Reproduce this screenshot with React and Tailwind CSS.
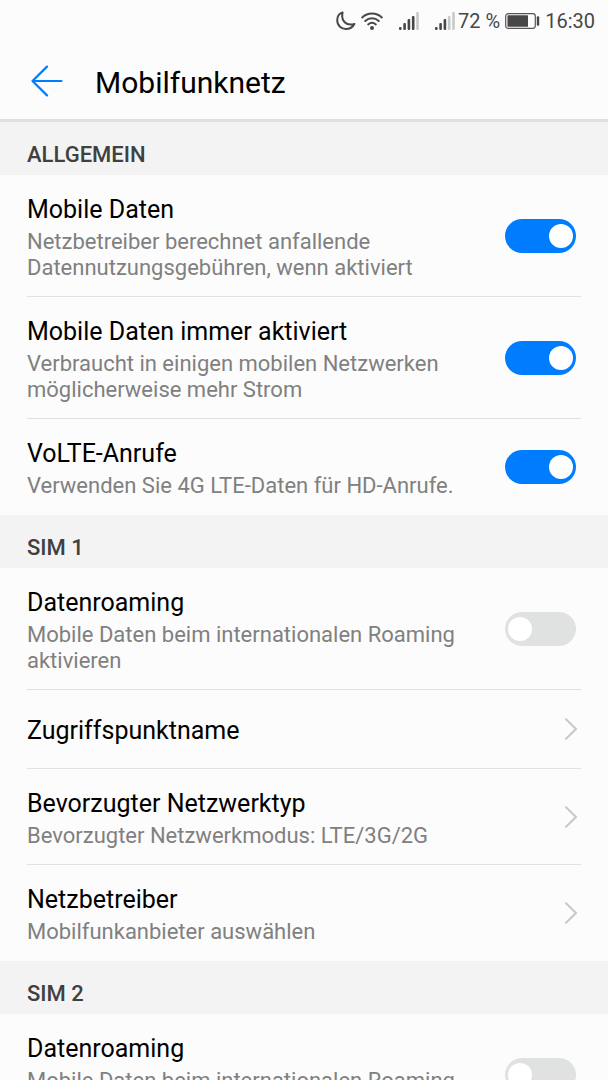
import React, { useState } from 'react';

const SECTIONS = [
  {
    title: 'ALLGEMEIN',
    items: [
      {
        id: 'mobile-data',
        type: 'switch',
        label: 'Mobile Daten',
        summary: 'Netzbetreiber berechnet anfallende Datennutzungsgebühren, wenn aktiviert',
        enabled: true
      },
      {
        id: 'always-on',
        type: 'switch',
        label: 'Mobile Daten immer aktiviert',
        summary: 'Verbraucht in einigen mobilen Netzwerken möglicherweise mehr Strom',
        enabled: true
      },
      {
        id: 'volte',
        type: 'switch',
        label: 'VoLTE-Anrufe',
        summary: 'Verwenden Sie 4G LTE-Daten für HD-Anrufe.',
        enabled: true
      }
    ]
  },
  {
    title: 'SIM 1',
    items: [
      {
        id: 'sim1-roaming',
        type: 'switch',
        label: 'Datenroaming',
        summary: 'Mobile Daten beim internationalen Roaming aktivieren',
        enabled: false
      },
      { id: 'sim1-apn', type: 'link', label: 'Zugriffspunktname' },
      {
        id: 'sim1-type',
        type: 'link',
        label: 'Bevorzugter Netzwerktyp',
        summary: 'Bevorzugter Netzwerkmodus: LTE/3G/2G'
      },
      {
        id: 'sim1-operator',
        type: 'link',
        label: 'Netzbetreiber',
        summary: 'Mobilfunkanbieter auswählen'
      }
    ]
  },
  {
    title: 'SIM 2',
    items: [
      {
        id: 'sim2-roaming',
        type: 'switch',
        label: 'Datenroaming',
        summary: 'Mobile Daten beim internationalen Roaming aktivieren',
        enabled: false
      }
    ]
  }
];

const MoonIcon = () => (
  <svg width="20" height="20" viewBox="0 0 20 20" fill="none" stroke="#474747" strokeWidth="2" strokeLinejoin="round">
    <path d="M6.6 1.4C3.2 2.6 1.2 5.6 1.2 9.4c0 4.9 3.8 8.6 8.6 8.6 3.9 0 7-2 8.6-5-1.4.5-2.4.6-3.8.6-4.9 0-8.2-3.5-8.4-7.8 0-1.6.1-2.8.4-4.4z" />
  </svg>
);

const WifiIcon = () => (
  <svg width="22" height="20" viewBox="0 0 22 20" fill="none" stroke="#474747" strokeWidth="2" strokeLinecap="round">
    <path d="M1.2 6.4c5.6-5.2 14-5.2 19.6 0" />
    <path d="M4.2 10c4-3.6 9.6-3.6 13.6 0" />
    <path d="M7.2 13.4c2.3-2 5.3-2 7.6 0" />
    <circle cx="11" cy="17" r="2" fill="#474747" stroke="none" />
  </svg>
);

const SignalIcon = ({ level }) => (
  <svg width="20" height="18" viewBox="0 0 20 18">
    {[3, 7, 11, 14, 18].map((height, i) => (
      <rect
        key={height}
        x={i * 4.3}
        y={18 - height}
        width="2.6"
        height={height}
        rx="1"
        fill={i < level ? '#474747' : '#c8c8c8'}
      />
    ))}
  </svg>
);

const BatteryIcon = () => (
  <svg width="35" height="16" viewBox="0 0 35 16">
    <rect x="0.7" y="0.7" width="29.6" height="14.6" rx="2.5" fill="none" stroke="#555" strokeWidth="1.2" />
    <rect x="2.5" y="2.3" width="20.5" height="11.4" rx="0.5" fill="#474747" />
    <rect x="31.8" y="3.2" width="2.4" height="9.6" rx="1" fill="#474747" />
  </svg>
);

const BackIcon = () => (
  <svg width="32" height="32" viewBox="0 0 32 32" fill="none" stroke="#007dff" strokeWidth="2.2" strokeLinecap="round" strokeLinejoin="round">
    <path d="M16 1.6 1.5 16 16 30.4M1.5 16h29" />
  </svg>
);

const ChevronIcon = () => (
  <svg width="14" height="22" viewBox="0 0 14 22" fill="none" stroke="#c9c9c9" strokeWidth="2.1" strokeLinecap="round" strokeLinejoin="round" className="shrink-0">
    <path d="M2 1.3 12 11 2 20.7" />
  </svg>
);

const ItemText = ({ label, summary }) => (
  <span className="block min-w-0 flex-1 pt-[19px] pb-[15px]">
    <span className="block text-[25px] leading-8 text-black">{label}</span>
    {summary && <span className="mt-[3px] block text-[22px] leading-[26px] text-[#808080]">{summary}</span>}
  </span>
);

const SwitchItem = ({ item }) => {
  const [checked, setChecked] = useState(item.enabled);

  return (
    <label htmlFor={item.id} className="flex cursor-pointer items-center gap-10 pr-[5px]">
      <ItemText label={item.label} summary={item.summary} />
      <input
        id={item.id}
        type="checkbox"
        role="switch"
        checked={checked}
        onChange={(e) => setChecked(e.target.checked)}
        className="flex h-[34px] w-[71px] shrink-0 cursor-pointer appearance-none items-center rounded-full bg-[#e0e2e1] px-[3px] before:size-6 before:rounded-full before:bg-white before:content-[''] checked:justify-end checked:bg-[#007dff]"
      />
    </label>
  );
};

const LinkItem = ({ item }) => (
  <a href={`#${item.id}`} className="flex min-h-[78px] items-center gap-10 pr-[3px]">
    <ItemText label={item.label} summary={item.summary} />
    <ChevronIcon />
  </a>
);

const StatusBar = () => (
  <div className="flex h-[42px] items-center justify-end pr-[13px] text-[20px] leading-6 text-[#474747]">
    <div className="flex items-center">
      <MoonIcon />
      <span className="ml-[5px]"><WifiIcon /></span>
      <span className="ml-4"><SignalIcon level={4} /></span>
      <span className="ml-4"><SignalIcon level={3} /></span>
    </div>
    <span className="ml-[3px]">72 %</span>
    <span className="ml-[5px]"><BatteryIcon /></span>
    <span className="ml-[5px]">16:30</span>
  </div>
);

const App = () => {
  return (
    <div className="h-screen overflow-hidden bg-[#fcfcfc] font-['Roboto',sans-serif]">
      <header className="border-b-[3px] border-[#e0e0e0]">
        <StatusBar />
        <div className="flex h-[77px] items-center gap-8 px-[31px]">
          <button type="button" aria-label="Zurück" className="cursor-pointer">
            <BackIcon />
          </button>
          <h1 className="pt-1 text-[30px] leading-10 text-black">Mobilfunknetz</h1>
        </div>
      </header>

      <main>
        {SECTIONS.map((section) => (
          <section key={section.title}>
            <h2 className="bg-[#f3f3f3] px-[27px] pt-5 pb-[7px] text-[22px] leading-[26px] font-medium text-[#404040]">
              {section.title}
            </h2>
            <ul className="px-[27px]">
              {section.items.map((item) => (
                <li key={item.id} className="border-b border-[#e2e2e2] last:border-transparent">
                  {item.type === 'switch' ? <SwitchItem item={item} /> : <LinkItem item={item} />}
                </li>
              ))}
            </ul>
          </section>
        ))}
      </main>
    </div>
  );
};

export default App;
